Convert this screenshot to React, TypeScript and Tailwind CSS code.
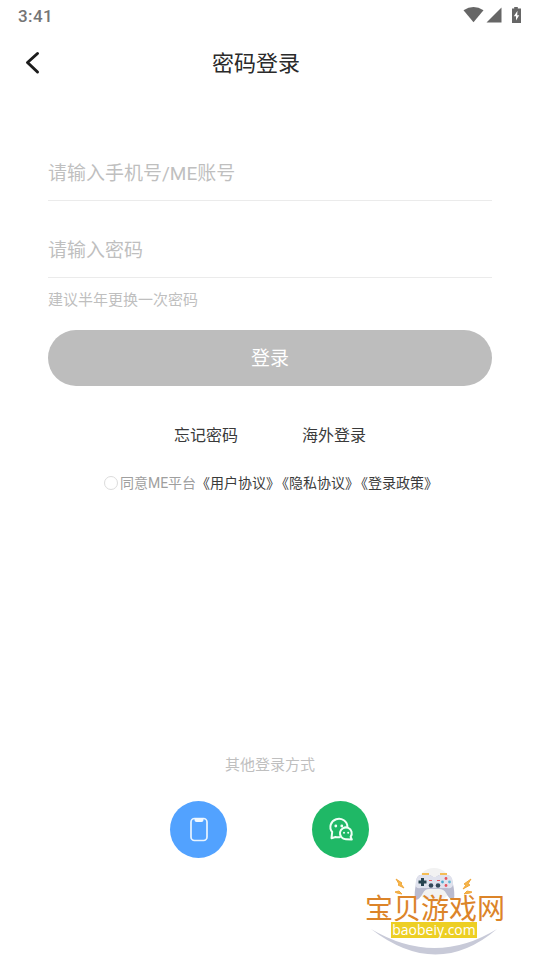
const agreements = ["《用户协议》", "《隐私协议》", "《登录政策》"];

function StatusBar() {
  return (
    <div className="flex h-8 items-center justify-between pl-[18px] pr-4">
      <span className="pt-0.5 text-[17px] font-medium tracking-wide text-[#757575]">3:41</span>
      <svg width="62" height="20" viewBox="0 0 62 20" fill="#666" aria-hidden="true">
        <path d="M1.5 4.2Q11.500-2 21.500 4.200L11.500 16.200Z" />
        <path d="M39.500 1.500V16.500H24.500Z" />
        <path d="M50 2.500h2.200V1h3.600v1.500H59V17H50Z" />
        <path d="M55.500 4.800 51.800 10.200h2.200v4.200l3.200-5.200h-2Z" fill="#fff" />
      </svg>
    </div>
  );
}

function Header() {
  return (
    <header className="flex h-[62px] items-center pl-5 pr-[76px]">
      <button type="button" aria-label="返回" className="p-1">
        <svg width="20" height="24" viewBox="0 0 20 24" fill="none" stroke="#1c1c1c" strokeWidth="3" strokeLinecap="round" strokeLinejoin="round">
          <path d="M13.500 2.500 3.500 11.500 13.500 21" />
        </svg>
      </button>
      <h1 className="flex-1 text-center text-[22px] text-[#2a2a2a]">密码登录</h1>
    </header>
  );
}

function PhoneIcon() {
  return (
    <svg viewBox="0 0 57 57" className="size-full" fill="none" aria-hidden="true">
      <rect x="21" y="17.500" width="16" height="22" rx="3.500" stroke="#e8f4ff" strokeWidth="1.700" />
      <path d="M24.500 17h9v2q0 2-2 2h-5q-2 0-2-2Z" fill="#f2f9ff" />
    </svg>
  );
}

function WechatIcon() {
  return (
    <svg viewBox="0 0 57 57" className="size-full" fill="none" stroke="#f0fff6" strokeWidth="2" strokeLinejoin="round" aria-hidden="true">
      <path d="M35.400 26A8.500 8.200 0 1 0 20.200 31L19.500 37.200 23.500 36Q26 36.700 28.500 36" />
      <path d="M38.600 35.800A5.900 5.900 0 1 0 34 38.200L39.800 38.500Z" fill="#1fb866" />
      <g fill="#f0fff6" stroke="none">
        <circle cx="23.800" cy="25" r="1.400" />
        <circle cx="29.800" cy="25" r="1.400" />
        <circle cx="32" cy="31.800" r="1" />
        <circle cx="36.200" cy="31.800" r="1" />
      </g>
    </svg>
  );
}

function SiteLogo() {
  return (
    <svg width="160" height="100" viewBox="0 0 160 100" className="absolute bottom-0 right-[25px]" role="img" aria-label="宝贝游戏网">
      <path d="M16 69Q80 107 142 69Q82 120 16 69Z" fill="#c8cad8" />
      <circle cx="79" cy="25" r="17" fill="#f2f2f2" />
      <path d="M67 14h7M85 14h7" stroke="#f5bd55" strokeWidth="2" />
      <path
        d="M65 15H75L78 17H81L84 15H93Q97 16 98 24Q100 33 99 39Q96 42 91 33Q89 29 84 29H74Q70 29 68 33Q63 42 60 39Q59 33 61 24Q61 16 65 15Z"
        fill="#b9bbcf"
      />
      <path d="M65 15H75L78 17H81L84 15H93Q98 16 98 24Q98 29 92 28H66Q60 29 60.500 24Q61 16 65 15Z" fill="#e0e2ed" />
      <path d="M67.500 18v8M63.500 22h8" stroke="#27434f" strokeWidth="3" />
      <circle cx="76" cy="25.500" r="2.300" fill="#34485a" />
      <circle cx="83" cy="25.500" r="2.300" fill="#34485a" />
      <path d="M74 20.500h3M82 20.500h3" stroke="#ed5862" />
      <circle cx="91" cy="18.500" r="1.400" fill="#e7535e" />
      <circle cx="91" cy="25.500" r="1.400" fill="#e7535e" />
      <circle cx="87.500" cy="22" r="1.400" fill="#4ba9ce" />
      <circle cx="94.500" cy="22" r="1.400" fill="#62b7d4" />
      <g fill="#f6b64b" stroke="#f0a83c" strokeWidth="1">
        <path d="M41 19 47 23 46 24 49 28 43 25 44 24Z" />
        <path d="M40 32 44 31 47 34 42 33Z" />
        <path d="M116 19 109 24 111 25 108 29 115 25 113 24Z" />
        <path d="M117 32 112 31 109 34 115 33Z" />
      </g>
      <text x="10" y="59" fontSize="28" fill="#dc8429" className="font-['Noto_Sans_CJK_SC',sans-serif]">宝贝游戏网</text>
      <rect x="36" y="62" width="86" height="16" fill="#edcf24" />
      <text x="79" y="75" textAnchor="middle" fontSize="14" fill="#fff" className="font-['Open_Sans',sans-serif]">baobeiy.com</text>
    </svg>
  );
}

export default function App() {
  return (
    <div className="relative flex min-h-screen flex-col bg-white font-['Roboto','Noto_Sans_CJK_SC',sans-serif]">
      <StatusBar />
      <Header />

      <main className="flex flex-1 flex-col px-12 pt-[50px]">
        <form className="flex flex-col">
          <input
            type="text"
            aria-label="手机号/ME账号"
            placeholder="请输入手机号/ME账号"
            className="h-[57px] border-b border-[#ebebeb] pt-[3px] text-[19px] outline-none placeholder:text-[#bfbfbf]"
          />
          <input
            type="password"
            aria-label="密码"
            placeholder="请输入密码"
            className="mt-5 h-[57px] border-b border-[#ebebeb] pt-[3px] text-[19px] outline-none placeholder:text-[#bfbfbf]"
          />
          <p className="mt-3 text-[15px] leading-5 text-[#bfbfbf]">建议半年更换一次密码</p>
          <button type="button" className="mt-5 h-14 rounded-full bg-[#bdbdbd] pt-0.5 text-[19px] text-white">登录</button>

          <div className="mt-[38px] flex justify-center gap-16 text-base text-[#3a3a3a]">
            <a href="#forgot">忘记密码</a>
            <a href="#overseas">海外登录</a>
          </div>

          <div className="mt-[25px] flex items-center justify-center pr-[3px] text-sm text-[#3a3a3a]">
            <input id="agree" type="checkbox" className="mr-0.5 size-3.5 appearance-none rounded-full border border-[#dcdcdc] checked:bg-[#52a2ff]" />
            <label htmlFor="agree" className="text-[#9f9f9f]">同意ME平台</label>
            {agreements.map((name) => (
              <a key={name} href="#agreement" className="-mr-[5px]">{name}</a>
            ))}
          </div>
        </form>

        {/* Other sign-in methods */}
        <section className="mt-auto flex flex-col items-center pb-[102px] pt-16">
          <h2 className="text-[15px] leading-5 text-[#bfbfbf]">其他登录方式</h2>
          <div className="mt-[26px] flex gap-[85px] pr-0.5">
            <button type="button" aria-label="手机登录" className="size-[57px] rounded-full bg-[#52a2ff]"><PhoneIcon /></button>
            <button type="button" aria-label="微信登录" className="size-[57px] rounded-full bg-[#1fb866]"><WechatIcon /></button>
          </div>
        </section>
      </main>

      <SiteLogo />
    </div>
  );
}
